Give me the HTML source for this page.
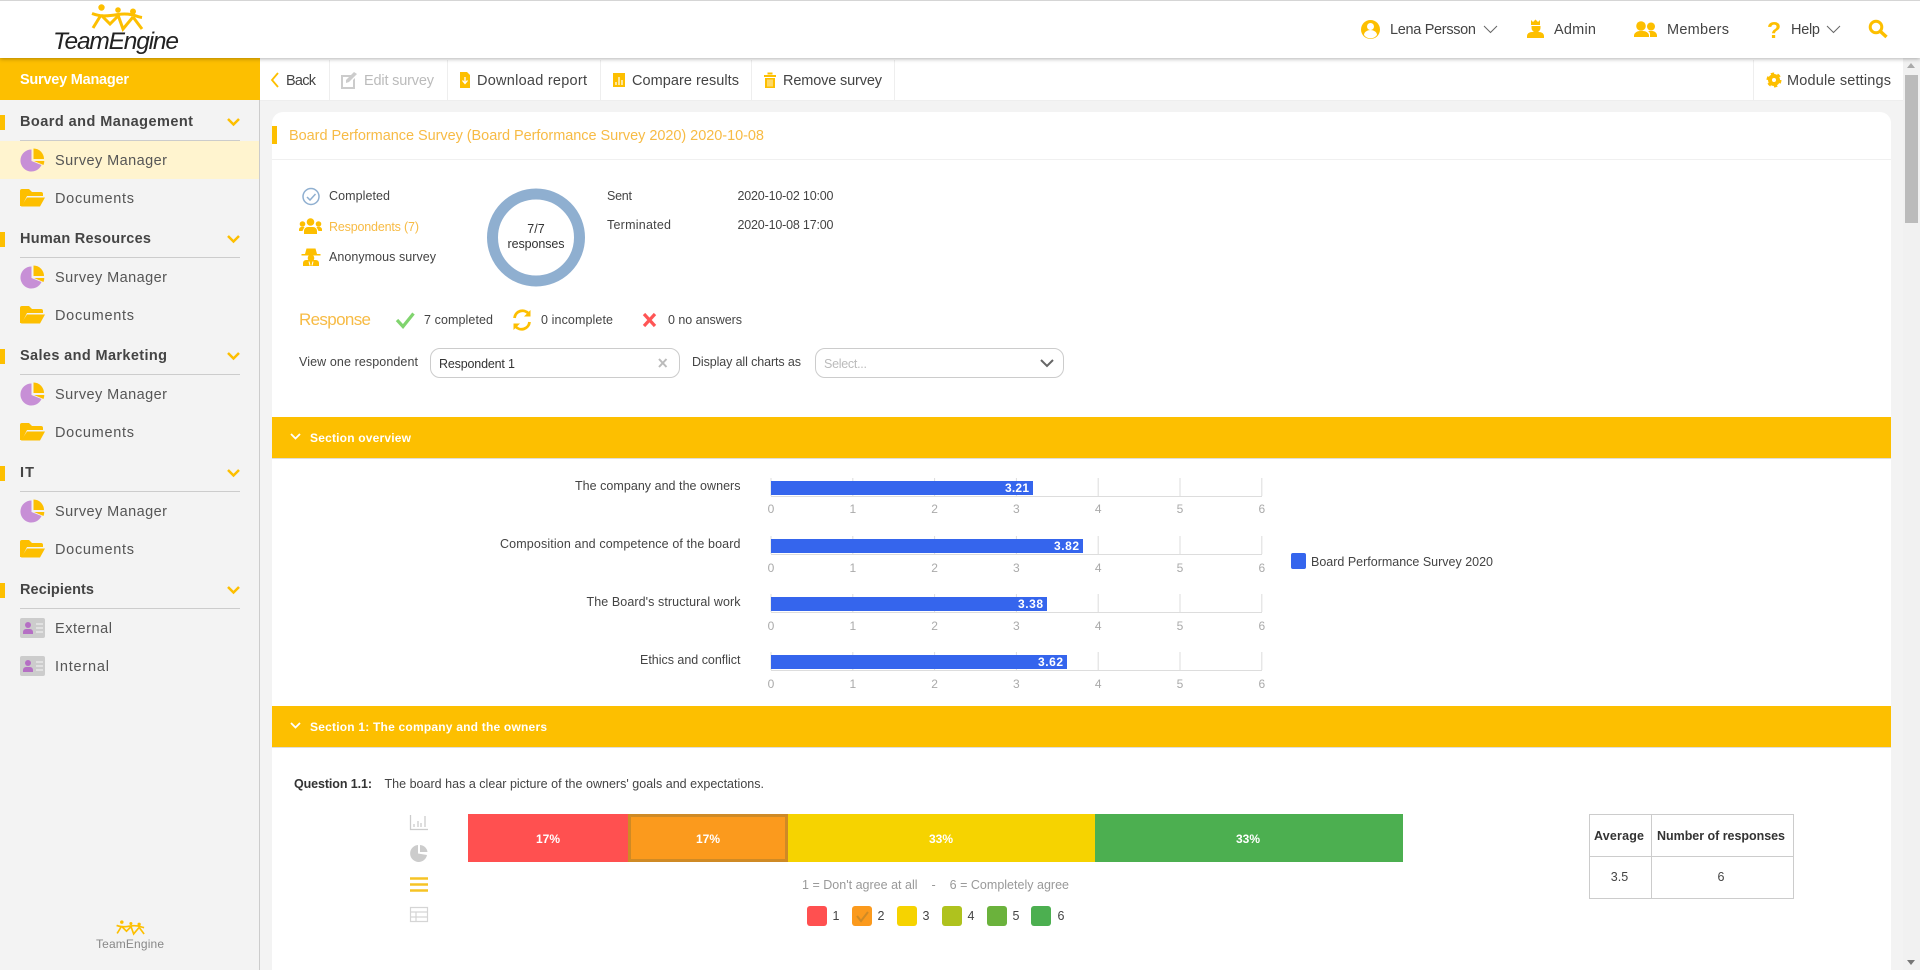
<!DOCTYPE html>
<html lang="en"><head><meta charset="utf-8"><title>Survey Manager - TeamEngine</title>
<style>
html,body{margin:0;padding:0;width:1920px;height:970px;overflow:hidden;background:#f3f3f3;font-family:"Liberation Sans",sans-serif}
.b{position:absolute}
svg{position:absolute;left:0;top:0}
text{font-family:"Liberation Sans",sans-serif;font-size:12.5px;fill:#444}
.n{font-size:14.5px;fill:#555}
.g{font-size:14.5px;font-weight:bold;fill:#444}
.t{font-size:14.5px;fill:#444}
.y{fill:#f7bb45}
.w{fill:#fff;font-weight:bold;font-size:12px}
.a{fill:#aaa;text-anchor:middle;font-size:12px}
.c{text-anchor:middle}
</style></head><body>
<div class="b" style="left:0;top:0;width:1920px;height:58px;background:#fff;border-top:1px solid #d5d5d5;box-sizing:border-box;box-shadow:0 1px 4px rgba(0,0,0,.3);z-index:2"></div>
<div class="b" style="left:0;top:58px;width:259px;height:912px;background:#f3f3f3;border-right:1px solid #ccc"></div>
<div class="b" style="left:0;top:58px;width:260px;height:42px;background:#fdbf00"></div>
<div class="b" style="left:0;top:141px;width:259px;height:38px;background:#fff4cf"></div>
<div class="b" style="left:260px;top:58px;width:1643px;height:43px;background:#fff;border-bottom:1px solid #eee;box-sizing:border-box"></div>
<div class="b" style="left:329px;top:60px;width:1px;height:40px;background:#eee"></div>
<div class="b" style="left:447px;top:60px;width:1px;height:40px;background:#eee"></div>
<div class="b" style="left:600px;top:60px;width:1px;height:40px;background:#eee"></div>
<div class="b" style="left:751px;top:60px;width:1px;height:40px;background:#eee"></div>
<div class="b" style="left:894px;top:60px;width:1px;height:40px;background:#eee"></div>
<div class="b" style="left:1753px;top:60px;width:1px;height:40px;background:#eee"></div>
<div class="b" style="left:272px;top:112px;width:1619px;height:858px;background:#fff;border-radius:11px 11px 0 0"></div>
<div class="b" style="left:272px;top:159px;width:1619px;height:1px;background:#f0f0f0"></div>
<div class="b" style="left:272px;top:126px;width:5px;height:18px;background:#fdbf00"></div>
<div class="b" style="left:430px;top:348px;width:250px;height:30px;border:1px solid #ccc;border-radius:10px;box-sizing:border-box;background:#fff"></div>
<div class="b" style="left:815px;top:348px;width:249px;height:30px;border:1px solid #ccc;border-radius:10px;box-sizing:border-box;background:#fff"></div>
<div class="b" style="left:272px;top:417px;width:1619px;height:42px;background:#fdbf00;border-bottom:1px solid #ddd;box-sizing:border-box"></div>
<div class="b" style="left:272px;top:706px;width:1619px;height:42px;background:#fdbf00;border-bottom:1px solid #ddd;box-sizing:border-box"></div>
<div class="b" style="left:468px;top:814px;width:160px;height:48px;background:#ff5050"></div>
<div class="b" style="left:628px;top:814px;width:160px;height:48px;background:#fb9a1d;border:3px solid #cf8a25;box-sizing:border-box"></div>
<div class="b" style="left:788px;top:814px;width:307px;height:48px;background:#f6d300"></div>
<div class="b" style="left:1095px;top:814px;width:308px;height:48px;background:#4caf50"></div>
<div class="b" style="left:1589px;top:814px;width:205px;height:85px;border:1px solid #ccc;box-sizing:border-box"></div>
<div class="b" style="left:1651px;top:814px;width:1px;height:85px;background:#ccc"></div>
<div class="b" style="left:1589px;top:856px;width:205px;height:1px;background:#ccc"></div>
<div class="b" style="left:1903px;top:58px;width:17px;height:912px;background:#f1f1f1"></div>
<div class="b" style="left:1905px;top:75px;width:13px;height:148px;background:#bbb"></div>

<svg width="1920" height="970" viewBox="0 0 1920 970" style="z-index:3">
<defs>
<g id="pie"><path d="M31.500 149.500a11 11 0 1 0 10 15.500l-10-4z" fill="#c78fd6"/><path d="M33.500 148.500a10.500 10.500 0 0 1 10.500 10.500h-10.500z" fill="#fdbf00"/><path d="M34 161h10.300a11 11 0 0 1-.8 4z" fill="#fdbf00"/></g>
<g id="folder"><path d="M20 206v-15a2 2 0 0 1 2-2h7l3 3h9a2 2 0 0 1 2 2v2H27l-5 10z" fill="#fdbf00"/><path d="M21 206.500l6-9h18l-5 9z" fill="#fdbf00"/></g>
<g id="card"><rect x="20" y="618" width="25" height="20" rx="2" fill="#ccc"/><circle cx="28" cy="625" r="3" fill="#b56fc4"/><path d="M23 634v-2a3 3 0 0 1 3-3h4a3 3 0 0 1 3 3v2z" fill="#b56fc4"/><path d="M36 624h7M36 628h7M36 632h7" stroke="#e8e8e8" stroke-width="1.500"/></g>
<g id="chev"><path d="M228 119l5.500 5.500 5.500-5.500" fill="none" stroke="#fdbf00" stroke-width="2.500"/></g>
<g id="logo" fill="none" stroke="#fdbf00" stroke-width="3"><path d="M92 13.500c8 3 14 3 26 1s18 2 24 3"/><path d="M101 15l-8 13M101 15l9 9 8-8M118 15l5 14 10-12M133 17l9 12"/><g fill="#fdbf00" stroke="none"><circle cx="101.500" cy="7.500" r="3.200"/><circle cx="118" cy="10" r="2.800"/><circle cx="133" cy="11.500" r="3"/></g></g>
</defs>

<!-- Header -->
<use href="#logo"/>
<text x="53" y="49" style="font-size:24.5px;font-style:italic;fill:#222" textLength="126">TeamEngine</text>
<circle cx="1370.500" cy="29.500" r="9.500" fill="#fdbf00"/><circle cx="1370.500" cy="26.500" r="3.500" fill="#fff"/><path d="M1364 35a6.500 5 0 0 1 13 0 8 8 0 0 1-13 0z" fill="#fff"/>
<text class="t" x="1390" y="34" textLength="86">Lena Persson</text>
<path d="M1484 26l6.500 6.500 6.500-6.500" fill="none" stroke="#666" stroke-width="1"/>
<path d="M1531 20l2 2 2.500-2.500 2.500 2.500 2-2v5h-9z" fill="#fdbf00"/><path d="M1531.500 26h9v2a4.500 4.500 0 0 1-9 0z" fill="#fdbf00"/><path d="M1527 38v-2a5 4 0 0 1 5-4h7a5 4 0 0 1 5 4v2z" fill="#fdbf00"/>
<text class="t" x="1554" y="34" textLength="42">Admin</text>
<circle cx="1641" cy="26" r="4.800" fill="#fdbf00"/><circle cx="1651" cy="26.500" r="4" fill="#fdbf00"/><path d="M1634 37v-2a6 5 0 0 1 6-4h3a6 5 0 0 1 6 4v2z" fill="#fdbf00"/><path d="M1650 37v-2a4 4 0 0 0-2-4h4.500a5 5 0 0 1 4.500 4v2z" fill="#fdbf00"/>
<text class="t" x="1667" y="34" textLength="62">Members</text>
<text x="1767" y="38" style="font-size:23px;font-weight:bold;fill:#fdbf00" textLength="13">?</text>
<text class="t" x="1791" y="34" textLength="29">Help</text>
<path d="M1827 26l6.500 6.500 6.500-6.500" fill="none" stroke="#666" stroke-width="1"/>
<circle cx="1876" cy="27" r="5.800" fill="none" stroke="#fdbf00" stroke-width="3"/><path d="M1880.500 31.500l6 5.500" stroke="#fdbf00" stroke-width="3.500"/>

<!-- Sidebar -->
<text x="20" y="84" style="font-size:14.5px;font-weight:bold;fill:#fff" textLength="109">Survey Manager</text>

<rect x="0" y="115" width="5" height="15" fill="#fdbf00"/>
<text class="g" x="20" y="126" textLength="173">Board and Management</text>
<use href="#chev"/><path d="M20 140.500h220" stroke="#ccc"/>
<use href="#pie"/><text class="n" x="55" y="165" textLength="112">Survey Manager</text>
<use href="#folder"/><text class="n" x="55" y="203" textLength="79">Documents</text>

<g transform="translate(0 117)">
<rect x="0" y="115" width="5" height="15" fill="#fdbf00"/>
<text class="g" x="20" y="126" textLength="131">Human Resources</text>
<use href="#chev"/><path d="M20 140.500h220" stroke="#ccc"/>
<use href="#pie"/><text class="n" x="55" y="165" textLength="112">Survey Manager</text>
<use href="#folder"/><text class="n" x="55" y="203" textLength="79">Documents</text>
</g>
<g transform="translate(0 234)">
<rect x="0" y="115" width="5" height="15" fill="#fdbf00"/>
<text class="g" x="20" y="126" textLength="147">Sales and Marketing</text>
<use href="#chev"/><path d="M20 140.500h220" stroke="#ccc"/>
<use href="#pie"/><text class="n" x="55" y="165" textLength="112">Survey Manager</text>
<use href="#folder"/><text class="n" x="55" y="203" textLength="79">Documents</text>
</g>
<g transform="translate(0 351)">
<rect x="0" y="115" width="5" height="15" fill="#fdbf00"/>
<text class="g" x="20" y="126" textLength="14">IT</text>
<use href="#chev"/><path d="M20 140.500h220" stroke="#ccc"/>
<use href="#pie"/><text class="n" x="55" y="165" textLength="112">Survey Manager</text>
<use href="#folder"/><text class="n" x="55" y="203" textLength="79">Documents</text>
</g>
<g transform="translate(0 468)">
<rect x="0" y="115" width="5" height="15" fill="#fdbf00"/>
<text class="g" x="20" y="126" textLength="74">Recipients</text>
<use href="#chev"/><path d="M20 140.500h220" stroke="#ccc"/>
</g>
<use href="#card"/><text class="n" x="55" y="633" textLength="57">External</text>
<use href="#card" transform="translate(0 38)"/><text class="n" x="55" y="671" textLength="54">Internal</text>
<use href="#logo" transform="translate(66 918) scale(.55)"/>
<text x="96" y="948" style="font-size:12px;fill:#888" textLength="68">TeamEngine</text>

<!-- Toolbar -->
<path d="M278 73l-6 7 6 7" fill="none" stroke="#fdbf00" stroke-width="1.800"/>
<text class="t" x="286" y="85" textLength="30">Back</text>
<path d="M341 75h10v2h-8v10h10v-7l2-2v11h-14z" fill="#ccc"/><path d="M346 80l8-8 3 2-8 8-3 1z" fill="#ccc"/>
<text class="t" x="364" y="85" textLength="70" style="fill:#bbb">Edit survey</text>
<path d="M460 72h7l3 3v13h-10z" fill="#fdbf00"/><path d="M465 77v6m-2.500-2.500l2.500 3 2.500-3" stroke="#fff" fill="none" stroke-width="1.300"/>
<text class="t" x="477" y="85" textLength="110">Download report</text>
<rect x="613" y="73" width="12" height="14" fill="#fdbf00"/><path d="M616 85v-3M619 85v-8M622 85v-5" stroke="#fff" stroke-width="1.200"/>
<text class="t" x="632" y="85" textLength="107">Compare results</text>
<path d="M764 75h12v2h-12zM767.500 72.500h5v2h-5zM765 78h10v10h-10z" fill="#fdbf00"/><path d="M768 79.500v7M770 79.500v7M772 79.500v7" stroke="#fff" stroke-width=".8"/>
<text class="t" x="783" y="85" textLength="99">Remove survey</text>
<circle cx="1774" cy="80" r="4" fill="none" stroke="#fdbf00" stroke-width="4"/><circle cx="1774" cy="80" r="6.500" fill="none" stroke="#fdbf00" stroke-width="2" stroke-dasharray="3.400 3.400"/>
<text class="t" x="1787" y="85" textLength="104">Module settings</text>
<path d="M1911 63l4 5h-8z" fill="#aaa"/><path d="M1911 965l4-5h-8z" fill="#777"/>

<!-- Card top -->
<text x="289" y="140" style="font-size:14.5px;fill:#f7bb45" textLength="475">Board Performance Survey (Board Performance Survey 2020) 2020-10-08</text>
<circle cx="311" cy="196.500" r="8" fill="none" stroke="#8fafd0" stroke-width="1.500"/><path d="M307 197l3 3 5.500-6" fill="none" stroke="#8fafd0" stroke-width="1.500"/>
<text x="329" y="200" textLength="61">Completed</text>
<circle cx="310.500" cy="222" r="3.800" fill="#fdbf00"/><circle cx="302.500" cy="224" r="2.800" fill="#fdbf00"/><circle cx="318.500" cy="224" r="2.800" fill="#fdbf00"/><path d="M304 234v-3a4 4 0 0 1 4-4h5a4 4 0 0 1 4 4v3z" fill="#fdbf00"/><path d="M299 231v-1.500a2.500 2.500 0 0 1 2.500-2.500h3l-2 4zM322 231v-1.500a2.500 2.500 0 0 0-2.500-2.500h-3l2 4z" fill="#fdbf00"/>
<text class="y" x="329" y="231" textLength="90">Respondents (7)</text>
<path d="M306.500 248.500h9l1.500 5.500h3.500v1.500h-19V254h3.500z" fill="#fdbf00"/><circle cx="311" cy="258" r="3.300" fill="#fdbf00"/><path d="M303 266v-3a3 3 0 0 1 3-3h10a3 3 0 0 1 3 3v3z" fill="#fdbf00"/><path d="M309 261.500l1 4M313 261.500l-1 4" stroke="#fff"/>
<text x="329" y="261" textLength="107">Anonymous survey</text>
<circle cx="536" cy="237.500" r="43.500" fill="none" stroke="#8fafd0" stroke-width="11"/>
<text class="c" x="536" y="233" style="fill:#333">7/7</text>
<text class="c" x="536" y="248" style="fill:#333" textLength="57">responses</text>
<text x="607" y="200" textLength="25">Sent</text>
<text x="737.500" y="200" textLength="96">2020-10-02 10:00</text>
<text x="607" y="229" textLength="64">Terminated</text>
<text x="737.500" y="229" textLength="96">2020-10-08 17:00</text>

<text x="299" y="325" style="font-size:17px;fill:#f7bb45" textLength="72">Response</text>
<path d="M397 320l6 6.500 10.500-13" fill="none" stroke="#80d46e" stroke-width="3.200"/>
<text x="424" y="324" textLength="69">7 completed</text>
<path d="M514.500 318a8 8 0 0 1 14-4.500" fill="none" stroke="#fdbf00" stroke-width="2.800"/><path d="M530.500 310v6.500h-6.500z" fill="#fdbf00"/><path d="M529.500 322a8 8 0 0 1-14 4.500" fill="none" stroke="#fdbf00" stroke-width="2.800"/><path d="M513.500 330v-6.500h6.500z" fill="#fdbf00"/>
<text x="541" y="324" textLength="72">0 incomplete</text>
<path d="M644 314l11 12M655 314l-11 12" stroke="#f55" stroke-width="3.200"/>
<text x="668" y="324" textLength="74">0 no answers</text>
<text x="299" y="366" textLength="119">View one respondent</text>
<text x="439" y="368" textLength="76" style="fill:#333">Respondent 1</text>
<path d="M659 359l7.500 8M666.500 359l-7.500 8" stroke="#bbb" stroke-width="2"/>
<text x="692" y="366" textLength="109">Display all charts as</text>
<text x="824" y="368" textLength="43" style="fill:#bbb">Select...</text>
<path d="M1041 360l6 6 6-6" fill="none" stroke="#666" stroke-width="2"/>

<!-- Section overview -->
<path d="M291 434l4.500 4.500 4.500-4.500" fill="none" stroke="#fff" stroke-width="1.800"/>
<text x="310" y="442" class="w" style="font-size:12px" textLength="101">Section overview</text>
<g stroke="#ddd">
<path d="M771 478v18M852.800 478v18M934.600 478v18M1016.400 478v18M1098.200 478v18M1180 478v18M1261.800 478v18"/>
<path d="M771 536v18M852.800 536v18M934.600 536v18M1016.400 536v18M1098.200 536v18M1180 536v18M1261.800 536v18"/>
<path d="M771 594v18M852.800 594v18M934.600 594v18M1016.400 594v18M1098.200 594v18M1180 594v18M1261.800 594v18"/>
<path d="M771 652v18M852.800 652v18M934.600 652v18M1016.400 652v18M1098.200 652v18M1180 652v18M1261.800 652v18"/>
<path d="M771 496.500h491M771 554.500h491M771 612.500h491M771 670.500h491"/>
</g>
<g fill="#3565ed">
<rect x="771" y="481" width="262" height="14"/>
<rect x="771" y="539" width="312" height="14"/>
<rect x="771" y="597" width="276" height="14"/>
<rect x="771" y="655" width="296" height="14"/>
</g>
<text class="w" x="1005" y="492" textLength="24">3.21</text>
<text class="w" x="1054" y="550" textLength="25">3.82</text>
<text class="w" x="1018" y="608" textLength="25">3.38</text>
<text class="w" x="1038" y="666" textLength="25">3.62</text>
<text x="575" y="490" textLength="165.500">The company and the owners</text>
<text x="500" y="548" textLength="240.500">Composition and competence of the board</text>
<text x="586.500" y="606" textLength="154">The Board's structural work</text>
<text x="640" y="664" textLength="100.500">Ethics and conflict</text>
<g class="ax">
<text class="a" x="771" y="513">0</text><text class="a" x="852.800" y="513">1</text><text class="a" x="934.600" y="513">2</text><text class="a" x="1016.400" y="513">3</text><text class="a" x="1098.200" y="513">4</text><text class="a" x="1180" y="513">5</text><text class="a" x="1261.800" y="513">6</text>
<text class="a" x="771" y="572">0</text><text class="a" x="852.800" y="572">1</text><text class="a" x="934.600" y="572">2</text><text class="a" x="1016.400" y="572">3</text><text class="a" x="1098.200" y="572">4</text><text class="a" x="1180" y="572">5</text><text class="a" x="1261.800" y="572">6</text>
<text class="a" x="771" y="630">0</text><text class="a" x="852.800" y="630">1</text><text class="a" x="934.600" y="630">2</text><text class="a" x="1016.400" y="630">3</text><text class="a" x="1098.200" y="630">4</text><text class="a" x="1180" y="630">5</text><text class="a" x="1261.800" y="630">6</text>
<text class="a" x="771" y="688">0</text><text class="a" x="852.800" y="688">1</text><text class="a" x="934.600" y="688">2</text><text class="a" x="1016.400" y="688">3</text><text class="a" x="1098.200" y="688">4</text><text class="a" x="1180" y="688">5</text><text class="a" x="1261.800" y="688">6</text>
</g>
<rect x="1291" y="553" width="15" height="16" rx="2" fill="#3565ed"/>
<text x="1311" y="566" textLength="182">Board Performance Survey 2020</text>

<!-- Section 1 -->
<path d="M291 723l4.500 4.500 4.500-4.500" fill="none" stroke="#fff" stroke-width="1.800"/>
<text x="310" y="731" class="w" style="font-size:12px" textLength="237">Section 1: The company and the owners</text>
<text x="294" y="788" style="font-weight:bold;fill:#333" textLength="78">Question 1.1:</text>
<text x="384.500" y="788" textLength="379.500" style="fill:#444">The board has a clear picture of the owners' goals and expectations.</text>
<path d="M410.500 815v14.500h17.500" fill="none" stroke="#ccc" stroke-width="1.300"/><path d="M414 827v-3M418 827v-6M421 827v-4M425 827v-11" stroke="#ccc" stroke-width="1.300"/>
<path d="M418 845a8.500 8.500 0 1 0 9 10l-9-1.500z" fill="#ccc"/><path d="M420 845a8 8 0 0 1 7.500 7l-7.500 0z" fill="#ccc"/>
<path d="M410 878.500h18M410 884.500h18M410 890.500h18" stroke="#f6c325" stroke-width="2.500"/>
<path d="M410.500 907.500h17v14h-17zM410.500 912h17M410.500 917h17M416 912v10" fill="none" stroke="#d5d5d5" stroke-width="1.200"/>
<text class="w" x="548" y="843" style="text-anchor:middle">17%</text>
<text class="w" x="708" y="843" style="text-anchor:middle">17%</text>
<text class="w" x="941" y="843" style="text-anchor:middle">33%</text>
<text class="w" x="1248" y="843" style="text-anchor:middle">33%</text>
<text x="802" y="889" style="fill:#999;white-space:pre" textLength="267">1 = Don't agree at all    -    6 = Completely agree</text>
<rect x="807" y="906" width="20" height="20" rx="3" fill="#ff5050"/>
<rect x="852" y="906" width="20" height="20" rx="3" fill="#fb9a1d"/><path d="M857 916l4 5 7-9" fill="none" stroke="#cf8a25" stroke-width="2"/>
<rect x="897" y="906" width="20" height="20" rx="3" fill="#f6d300"/>
<rect x="942" y="906" width="20" height="20" rx="3" fill="#afc21e"/>
<rect x="987" y="906" width="20" height="20" rx="3" fill="#6bb23c"/>
<rect x="1031" y="906" width="20" height="20" rx="3" fill="#4caf50"/>
<text class="c" x="836" y="920">1</text><text class="c" x="881" y="920">2</text><text class="c" x="926" y="920">3</text><text class="c" x="971" y="920">4</text><text class="c" x="1016" y="920">5</text><text class="c" x="1061" y="920">6</text>
<text x="1594" y="840" style="font-weight:bold;fill:#333" textLength="50">Average</text>
<text x="1657" y="840" style="font-weight:bold;fill:#333" textLength="128">Number of responses</text>
<text class="c" x="1619.500" y="881">3.5</text>
<text class="c" x="1721" y="881">6</text>
</svg>
</body></html>
